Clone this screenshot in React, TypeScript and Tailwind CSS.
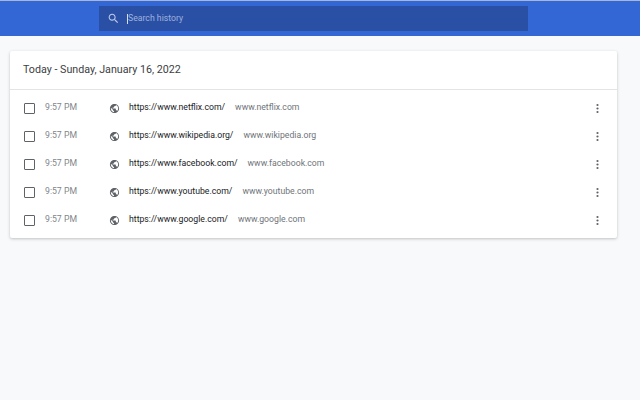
import React from "react";

const rows = [
  ["https://www.netflix.com/", "www.netflix.com"],
  ["https://www.wikipedia.org/", "www.wikipedia.org"],
  ["https://www.facebook.com/", "www.facebook.com"],
  ["https://www.youtube.com/", "www.youtube.com"],
  ["https://www.google.com/", "www.google.com"],
];

function Globe() {
  return (
    <svg width="11" height="11" viewBox="0 0 24 24" className="shrink-0" fill="#5f6368">
      <path d="M12 2C6.48 2 2 6.48 2 12s4.48 10 10 10 10-4.48 10-10S17.52 2 12 2zm-1 17.93c-3.95-.49-7-3.85-7-7.93 0-.62.08-1.21.21-1.79L9 15v1c0 1.1.9 2 2 2v1.93zm6.9-2.54c-.26-.81-1-1.39-1.9-1.39h-1v-3c0-.55-.45-1-1-1H8v-2h2c.55 0 1-.45 1-1V7h2c1.1 0 2-.9 2-2v-.41c2.93 1.19 5 4.06 5 7.41 0 2.08-.8 3.97-2.1 5.39z" />
    </svg>
  );
}

function More() {
  return (
    <svg width="11" height="11" viewBox="0 0 11 11" className="shrink-0" fill="#5f6368">
      <circle cx="5.5" cy="2" r="1.1" />
      <circle cx="5.5" cy="5.5" r="1.1" />
      <circle cx="5.5" cy="9" r="1.1" />
    </svg>
  );
}

export default function App() {
  return (
    <div className="h-[400px] w-[640px] overflow-hidden bg-[#f8f9fa] font-['Roboto',sans-serif]">
      <header className="flex h-9 items-center border-t border-t-[#a9b6d3] bg-[#3367d6] pl-[99px]">
        <div className="flex h-[25px] w-[429px] items-center bg-[#2a50a6] pl-2">
          <svg width="13" height="13" viewBox="0 0 24 24" className="shrink-0" fill="#bfcbe8">
            <path d="M15.5 14h-.79l-.28-.27C15.41 12.59 16 11.11 16 9.5 16 5.91 13.09 3 9.5 3S3 5.91 3 9.5 5.91 16 9.5 16c1.61 0 3.09-.59 4.23-1.57l.27.28v.79l5 4.99L20.49 19l-4.99-5zm-6 0C7.01 14 5 11.99 5 9.5S7.01 5 9.5 5 14 7.01 14 9.5 11.99 14 9.5 14z" />
          </svg>
          <span className="ml-[7px] h-[10px] w-px shrink-0 bg-[#d5ddf0]" />
          <span className="text-[8.7px] leading-none text-[#9fb0dc]">Search history</span>
        </div>
      </header>
      <main className="ml-[10px] mt-[15px] w-[607px] rounded-[2px] bg-white pb-1 shadow-[0_1px_3px_rgba(60,64,67,0.3)]">
        <h2 className="flex h-[39px] items-center border-b border-b-[#e3e4e6] pl-[13px] text-[10.7px] font-normal text-[#3c4043]">
          Today - Sunday, January 16, 2022
        </h2>
        <ul className="pt-[4px]">
          {rows.map(([url, domain]) => (
            <li key={url} className="flex h-7 items-center pl-[14px] pr-[14px] text-[8.7px]">
              <span className="box-border h-[11px] w-[11px] shrink-0 rounded-[1px] border-[1.4px] border-[#5f6368]" />
              <span className="ml-[10px] w-[64px] shrink-0 text-[#80868b]">9:57 PM</span>
              <Globe />
              <span className="ml-[9px] text-[#202124]">{url}</span>
              <span className="ml-[10px] text-[#6f7479]">{domain}</span>
              <span className="ml-auto"><More /></span>
            </li>
          ))}
        </ul>
      </main>
    </div>
  );
}
